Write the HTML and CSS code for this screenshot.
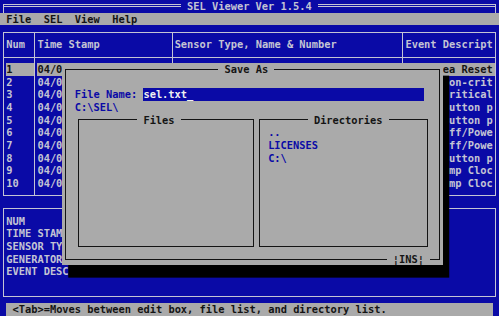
FILE: index.html
```html
<!DOCTYPE html>
<html lang="en">
<head>
    <meta charset="UTF-8">
    <title>SEL Viewer Ver 1.5.4</title>
    <link rel="stylesheet" href="styles.css">
</head>
<body>
    <div class="screen">
        <!-- Title bar -->
        <header class="titlebar">
            <span class="rule rule-left"></span>
            <span class="app-title">SEL Viewer Ver 1.5.4</span>
            <span class="rule rule-right"></span>
        </header>

        <!-- Menu -->
        <nav class="menubar">
            <span>File</span>
            <span>SEL</span>
            <span>View</span>
            <span>Help</span>
        </nav>

        <!-- Event list -->
        <section class="event-table">
            <div class="cell head num">Num</div>
            <div class="cell head time">Time Stamp</div>
            <div class="cell head sensor">Sensor Type, Name &amp; Number</div>
            <div class="cell head event">Event Descript</div>

            <div class="cell first num selected"><span>1</span></div>
            <div class="cell first time selected"><span>04/07/2010 09:12:44</span></div>
            <div class="cell first sensor selected"><span>Event Logging Disabled #0x07</span></div>
            <div class="cell first event selected"><span>Log Area Reset</span></div>

            <div class="cell num">2</div>
            <div class="cell time">04/07/2010 09:15:03</div>
            <div class="cell sensor">Temperature #0x30</div>
            <div class="cell event">Upper Non-crit</div>

            <div class="cell num">3</div>
            <div class="cell time">04/07/2010 09:15:09</div>
            <div class="cell sensor">Temperature #0x30</div>
            <div class="cell event">Upper Critical</div>

            <div class="cell num">4</div>
            <div class="cell time">04/07/2010 10:02:31</div>
            <div class="cell sensor">Button #0x10</div>
            <div class="cell event">Power Button p</div>

            <div class="cell num">5</div>
            <div class="cell time">04/07/2010 10:02:33</div>
            <div class="cell sensor">Button #0x10</div>
            <div class="cell event">Power Button p</div>

            <div class="cell num">6</div>
            <div class="cell time">04/07/2010 10:02:35</div>
            <div class="cell sensor">System ACPI Power State #0x11</div>
            <div class="cell event">Power Off/Powe</div>

            <div class="cell num">7</div>
            <div class="cell time">04/08/2010 08:47:10</div>
            <div class="cell sensor">System ACPI Power State #0x11</div>
            <div class="cell event">Power Off/Powe</div>

            <div class="cell num">8</div>
            <div class="cell time">04/08/2010 08:47:12</div>
            <div class="cell sensor">Button #0x10</div>
            <div class="cell event">Power Button p</div>

            <div class="cell num">9</div>
            <div class="cell time">04/08/2010 08:47:40</div>
            <div class="cell sensor">System Event #0x12</div>
            <div class="cell event">Timestamp Cloc</div>

            <div class="cell last num">10</div>
            <div class="cell last time">04/08/2010 08:47:41</div>
            <div class="cell last sensor">System Event #0x12</div>
            <div class="cell last event">Timestamp Cloc</div>
        </section>

        <!-- Record detail -->
        <section class="detail-box">
            <div>NUM</div>
            <div>TIME STAMP</div>
            <div>SENSOR TYPE, NAME &amp; NUMBER</div>
            <div>GENERATOR ID</div>
            <div>EVENT DESCRIPTION</div>
        </section>

        <div class="statusbar">&lt;Tab&gt;=Moves between edit box, file list, and directory list.</div>

        <!-- Save As dialog -->
        <form class="dialog">
            <fieldset class="dialog-frame">
                <legend>Save As</legend>
                <div class="filename-row">
                    <label class="filename-label">File Name:</label>
                    <div class="filename-input">sel.txt_</div>
                </div>
                <div class="cur-path">C:\SEL\</div>
                <div class="lists">
                    <fieldset class="list-box files">
                        <legend>Files</legend>
                    </fieldset>
                    <fieldset class="list-box dirs">
                        <legend>Directories</legend>
                        <div>..</div>
                        <div>LICENSES</div>
                        <div>C:\</div>
                    </fieldset>
                </div>
                <span class="ins-badge">¦INS¦</span>
            </fieldset>
        </form>
    </div>
</body>
</html>
```

FILE: styles.css
```css
:root {
    --cw: 6.2375px;   /* one text column */
    --ch: 12.64px;    /* one text row */
    --blue: #0a0aa6;
    --grey: #aaaaaa;
    --light: #c4c4d4;
    --dark: #141414;
}
body {
    margin: 0;
    background-color: var(--blue);
}
.screen {
    width: 499px;
    height: 316px;
    display: grid;
    grid-template-columns: repeat(80, var(--cw));
    grid-template-rows: repeat(25, var(--ch));
    background-color: var(--blue);
    color: var(--light);
    font-family: "DejaVu Sans Mono", monospace;
    font-weight: bold;
    font-size: 10.36px;
    line-height: var(--ch);
    white-space: nowrap;
    overflow: hidden;
}

/* title bar */
.titlebar {
    grid-row: 1;
    grid-column: 1 / -1;
    display: flex;
    padding: 0 calc(var(--cw) / 2);
}
.rule {
    flex: 1;
    margin-top: 3.5px;
    border-top: 3px double var(--light);
}
.rule-left {
    border-left: 1px solid var(--light);
}
.rule-right {
    border-right: 1px solid var(--light);
}
.app-title {
    padding: 0 var(--cw);
}

/* menu */
.menubar {
    grid-row: 2;
    grid-column: 1 / -1;
    display: flex;
    gap: calc(var(--cw) * 2);
    padding-left: var(--cw);
    background-color: var(--grey);
    color: var(--dark);
}

/* event table */
.event-table {
    grid-row: 3 / 17;
    grid-column: 1 / -1;
    margin: calc(var(--ch) / 2) calc(var(--cw) / 2);
    border: 1px solid var(--light);
    display: grid;
    grid-template-columns: calc(var(--cw) * 5 - 1px) calc(var(--cw) * 22) calc(var(--cw) * 37) calc(var(--cw) * 15 - 1px);
    align-content: start;
}
.cell {
    overflow: hidden;
    padding-left: calc(var(--cw) / 2 - 1px);
}
.cell.time, .cell.sensor, .cell.event {
    border-left: 1px solid var(--light);
}
.cell.head {
    padding-top: calc(var(--ch) / 2 - 1px);
    padding-bottom: calc(var(--ch) / 2);
    border-bottom: 1px solid var(--light);
}
.cell.first {
    padding-top: calc(var(--ch) / 2 - 1px);
}
.cell.last {
    padding-bottom: calc(var(--ch) / 2 - 1px);
}
.cell span {
    display: block;
}
.cell.selected span {
    background-color: var(--grey);
    color: var(--dark);
}

/* record detail */
.detail-box {
    grid-row: 17 / 25;
    grid-column: 1 / -1;
    margin: calc(var(--ch) / 2) calc(var(--cw) / 2);
    border: 1px solid var(--light);
    padding: calc(var(--ch) / 2 - 1px) calc(var(--cw) / 2 - 1px);
    overflow: hidden;
}

/* status line */
.statusbar {
    grid-row: 25;
    grid-column: 2 / 80;
    padding-left: var(--cw);
    background-color: var(--grey);
    color: var(--dark);
}

/* dialog */
.dialog {
    grid-row: 6 / 22;
    grid-column: 11 / 72;
    z-index: 1;
    margin: 0;
    background-color: var(--grey);
    box-shadow: var(--cw) var(--ch) 0 #000;
    color: var(--blue);
}
fieldset {
    margin: 0;
    min-inline-size: 0;
    box-sizing: border-box;
    border: 1px solid var(--dark);
}
legend {
    padding: 0 var(--cw);
    color: var(--dark);
}
.dialog-frame {
    position: relative;
    margin: 0 calc(var(--cw) / 2);
    padding: var(--ch) 0 calc(var(--ch) - 1.5px) calc(var(--cw) * 1.5 - 1px);
}
.dialog-frame > legend {
    margin-left: calc(var(--cw) * 23);
}
.filename-row {
    display: flex;
    gap: var(--cw);
}
.filename-input {
    width: calc(var(--cw) * 45);
    background-color: var(--blue);
    color: #f0f0f0;
}
.lists {
    display: flex;
}
.list-box {
    height: calc(var(--ch) * 10.5 + 1px);
    padding: 0;
}
.files {
    width: calc(var(--cw) * 28 + 1px);
    margin-left: calc(var(--cw) / 2);
}
.files > legend {
    margin-left: calc(var(--cw) * 9.5 - 1px);
}
.dirs {
    width: calc(var(--cw) * 27 + 1px);
    margin-left: calc(var(--cw) - 1px);
    padding-left: calc(var(--cw) * 1.5 - 1px);
}
.dirs > legend {
    margin-left: calc(var(--cw) * 6.5 - 1px);
}
.ins-badge {
    position: absolute;
    right: calc(var(--cw) * 1.5 - 1px);
    bottom: calc(var(--ch) / -2 - 0.5px);
    padding: 0 var(--cw);
    background-color: var(--grey);
    color: var(--dark);
}
```
